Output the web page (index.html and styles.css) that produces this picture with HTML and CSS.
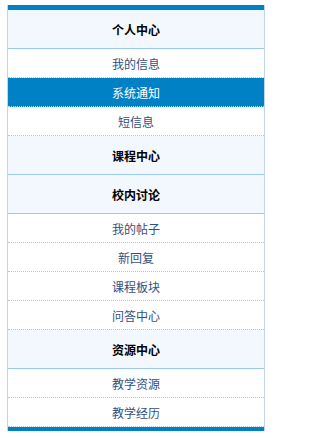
FILE: index.html
```html
<!DOCTYPE html>
<html lang="zh">
<head>
<meta charset="utf-8">
<title>菜单</title>
<link rel="stylesheet" href="styles.css">
</head>
<body>
<div class="menu">
  <div class="bar"></div>
  <div class="head">个人中心</div>
  <div class="item">我的信息</div>
  <div class="item active">系统通知</div>
  <div class="item">短信息</div>
  <div class="head">课程中心</div>
  <div class="head">校内讨论</div>
  <div class="item">我的帖子</div>
  <div class="item">新回复</div>
  <div class="item">课程板块</div>
  <div class="item">问答中心</div>
  <div class="head">资源中心</div>
  <div class="item">教学资源</div>
  <div class="item">教学经历</div>
  <div class="bar"></div>
</div>
</body>
</html>
```

FILE: styles.css
```css
html, body {
  background: #ffffff;
}
body {
  margin: 5px 0 0 7px;
  font-family: "Noto Sans CJK SC", "Noto Sans", sans-serif;
  font-size: 12px;
}
.menu {
  width: 258px;
  box-sizing: border-box;
  border-left: 1px solid #c2d3ec;
  border-right: 1px solid #c2d3ec;
  display: flex;
  flex-direction: column;
}
.bar {
  height: 5px;
  background: #0081c6;
}
.bar:last-child {
  height: 4px;
}
.head {
  height: 38px;
  border-bottom: 1px solid #9ccbf0;
  background: #f3f8fe;
  color: #000000;
  font-weight: bold;
  display: flex;
  align-items: center;
  justify-content: center;
}
.item {
  height: 28px;
  border-bottom: 1px dotted #a4cbec;
  background: #ffffff;
  color: #34507e;
  display: flex;
  align-items: center;
  justify-content: center;
}
.item.active {
  background: #0081c6;
  color: #ffffff;
  border-bottom-color: #b0d6f2;
}
```
